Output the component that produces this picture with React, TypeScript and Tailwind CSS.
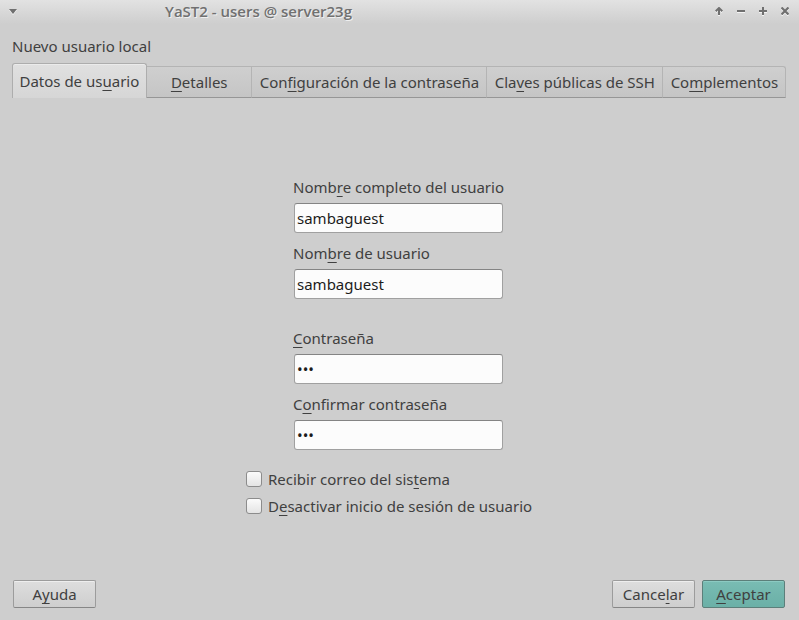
import type { ReactNode } from "react";

function Key({ children }: { children: ReactNode }) {
  return (
    <u className="underline decoration-1 underline-offset-3 [text-decoration-skip-ink:none]">
      {children}
    </u>
  );
}

function TitleBar() {
  const control = "flex h-[22px] w-[22px] items-center justify-center";
  return (
    <header className="flex h-6 items-start bg-linear-to-b from-[#e2e2e2] to-[#cecece] pr-[3px] text-[#707070]">
      <button type="button" aria-label="Menú de la ventana" className="flex h-[22px] w-[26px] items-center justify-center">
        <svg width="8" height="5" viewBox="0 0 8 5" fill="currentColor" className="drop-shadow-[0_1px_0_#f4f4f4]">
          <path d="M0 0h8L4 5z" />
        </svg>
      </button>
      <h1 className="grow pl-[139px] font-['Open_Sans',sans-serif] text-[15px] leading-[22px] font-semibold [text-shadow:1px_1px_0_#f0f0f0]">
        YaST2 - users @ server23g
      </h1>
      <div className="flex [&_svg]:drop-shadow-[0_1px_0_#f4f4f4]">
        <button type="button" aria-label="Enrollar" className={control}>
          <svg width="8" height="8" viewBox="0 0 8 8" fill="none" stroke="currentColor" strokeWidth="2">
            <path d="M4 8V1M0.7 4.2L4 1l3.3 3.2" />
          </svg>
        </button>
        <button type="button" aria-label="Minimizar" className={control}>
          <svg width="8" height="8" viewBox="0 0 8 8" fill="none" stroke="currentColor" strokeWidth="2">
            <path d="M0 4h8" />
          </svg>
        </button>
        <button type="button" aria-label="Maximizar" className={control}>
          <svg width="8" height="8" viewBox="0 0 8 8" fill="none" stroke="currentColor" strokeWidth="2">
            <path d="M0 4h8M4 0v8" />
          </svg>
        </button>
        <button type="button" aria-label="Cerrar" className={control}>
          <svg width="8" height="8" viewBox="0 0 8 8" fill="none" stroke="currentColor" strokeWidth="2.2">
            <path d="M0.5 0.5l7 7M7.5 0.5l-7 7" />
          </svg>
        </button>
      </div>
    </header>
  );
}

function Tab({ children }: { children: ReactNode }) {
  return (
    <button
      type="button"
      role="tab"
      aria-selected="false"
      className="h-8 min-w-[105px] border-t border-r border-b border-t-[#b4b4b4] border-r-[#b4b4b4] border-b-[#969696] bg-linear-to-b from-[#cfcfcf] to-[#c5c5c5] pr-[7px] pl-2 whitespace-nowrap last:rounded-tr-[3px]"
    >
      {children}
    </button>
  );
}

function Field({ id, type, value, children }: { id: string; type: string; value: string; children: ReactNode }) {
  return (
    <div className="flex flex-col gap-[6px]">
      <label htmlFor={id} className="-mx-px leading-5 whitespace-nowrap">
        {children}
      </label>
      <input
        id={id}
        type={type}
        defaultValue={value}
        className="h-[30px] w-full rounded-[3px] border border-[#a0a0a0] border-t-[#848484] bg-[#fcfcfc] px-[2px] text-[#1c1c1c] outline-none"
      />
    </div>
  );
}

function Check({ id, children }: { id: string; children: ReactNode }) {
  return (
    <div className="flex items-center gap-[6px]">
      <input
        id={id}
        type="checkbox"
        className="size-4 appearance-none rounded-[3px] border border-[#8c8c8c] bg-linear-to-b from-[#fbfbfb] to-[#e4e4e4] checked:bg-[#6fb5ac]"
      />
      <label htmlFor={id} className="leading-5 whitespace-nowrap">
        {children}
      </label>
    </div>
  );
}

const plainButton =
  "h-7 w-[83px] rounded-[2px] border border-[#9c9c9c] border-b-[#868686] bg-linear-to-b from-[#dedede] to-[#cecece] shadow-[inset_0_1px_0_#eeeeee]";
const primaryButton =
  "h-7 w-[83px] rounded-[2px] border border-[#5c7f7a] bg-linear-to-b from-[#79bcb3] to-[#6bb0a7] shadow-[inset_0_1px_0_#8ccac2]";

export default function App() {
  return (
    <div className="flex min-h-screen flex-col bg-[#cecece] font-['Noto_Sans',sans-serif] text-[15px] leading-5 text-[#404040]">
      <TitleBar />
      <main className="flex grow flex-col pt-3 pr-[13px] pb-3 pl-3">
        <h2 className="mb-[7px]">Nuevo usuario local</h2>
        <div role="tablist" className="flex items-end">
          <button
            type="button"
            role="tab"
            aria-selected="true"
            className="h-[35px] w-[135px] rounded-t-[3px] border border-b-0 border-[#adadad] bg-linear-to-b from-[#e0e0e0] to-[#d6d6d6] pb-px whitespace-nowrap shadow-[inset_0_1px_0_#ebebeb]"
          >
            Datos de us<Key>u</Key>ario
          </button>
          <Tab><Key>D</Key>etalles</Tab>
          <Tab>Con<Key>f</Key>iguración de la contraseña</Tab>
          <Tab>Cla<Key>v</Key>es públicas de SSH</Tab>
          <Tab>Co<Key>m</Key>plementos</Tab>
        </div>
        <form className="flex grow flex-col items-center pt-[79px] pr-px">
          <div className="flex w-[209px] flex-col gap-[10px]">
            <Field id="fullname" type="text" value="sambaguest">Nomb<Key>r</Key>e completo del usuario</Field>
            <Field id="username" type="text" value="sambaguest">Nom<Key>b</Key>re de usuario</Field>
          </div>
          <div className="mt-[29px] flex w-[209px] flex-col gap-[10px]">
            <Field id="password" type="password" value="abc"><Key>C</Key>ontraseña</Field>
            <Field id="confirm" type="password" value="abc">C<Key>o</Key>nfirmar contraseña</Field>
          </div>
          <div className="mt-[19px] flex w-[305px] flex-col gap-[7px]">
            <Check id="mail">Recibir correo del sis<Key>t</Key>ema</Check>
            <Check id="disable">D<Key>e</Key>sactivar inicio de sesión de usuario</Check>
          </div>
        </form>
        <footer className="flex gap-[7px] px-px">
          <button type="button" className={plainButton}>A<Key>y</Key>uda</button>
          <button type="button" className={`${plainButton} ml-auto`}>Cance<Key>l</Key>ar</button>
          <button type="button" className={primaryButton}><Key>A</Key>ceptar</button>
        </footer>
      </main>
    </div>
  );
}
